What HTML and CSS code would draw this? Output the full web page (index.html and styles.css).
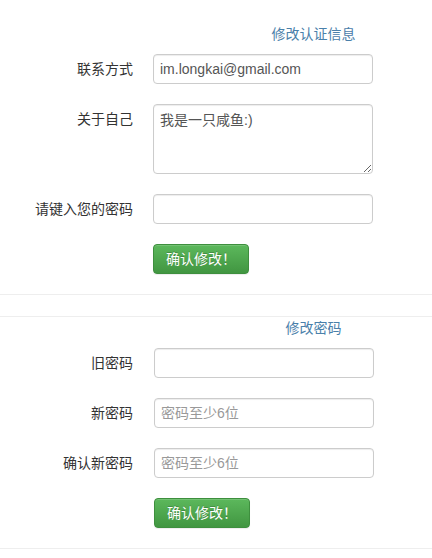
FILE: index.html
```html
<!DOCTYPE html>
<html lang="zh-CN">
<head>
<meta charset="utf-8">
<title>设置</title>
<link rel="stylesheet" href="styles.css">
</head>
<body>
<section class="panel panel-info">
  <div class="panel-title"><a href="#" class="title-link">修改认证信息</a></div>
  <div class="row">
    <label class="row-label">联系方式</label>
    <input class="field" type="text" value="im.longkai@gmail.com">
  </div>
  <div class="row">
    <label class="row-label">关于自己</label>
    <textarea class="field field-area">我是一只咸鱼:)</textarea>
  </div>
  <div class="row">
    <label class="row-label">请键入您的密码</label>
    <input class="field" type="password">
  </div>
  <div class="row">
    <span class="row-label"></span>
    <button class="btn-success" type="button">确认修改！</button>
  </div>
</section>
<section class="panel panel-pwd">
  <div class="panel-title"><a href="#" class="title-link">修改密码</a></div>
  <div class="row row-shift">
    <label class="row-label">旧密码</label>
    <input class="field" type="password">
  </div>
  <div class="row row-shift">
    <label class="row-label">新密码</label>
    <input class="field" type="password" placeholder="密码至少6位">
  </div>
  <div class="row row-shift">
    <label class="row-label">确认新密码</label>
    <input class="field" type="password" placeholder="密码至少6位">
  </div>
  <div class="row row-shift">
    <span class="row-label"></span>
    <button class="btn-success" type="button">确认修改！</button>
  </div>
</section>
</body>
</html>
```

FILE: styles.css
```css
html, body {
  margin: 0;
  padding: 0;
  background: #fff;
}
body {
  font-family: "Liberation Sans", "Noto Sans CJK SC", sans-serif;
  font-size: 14px;
  line-height: 20px;
  color: #333;
}
.panel {
  border-bottom: 1px solid #eee;
}
.panel-info {
  padding-top: 24px;
}
.panel-pwd {
  margin-top: 21px;
  border-top: 1px solid #eee;
  padding-top: 1px;
}
.panel-title {
  padding-left: 195px;
  text-align: center;
  line-height: 20px;
  margin-bottom: 10px;
}
.title-link {
  color: #4a80aa;
  text-decoration: none;
}
.row {
  display: flex;
  align-items: flex-start;
  gap: 20px;
  margin-bottom: 20px;
}
.row-shift {
  gap: 21px;
}
.row-label {
  width: 133px;
  flex: none;
  text-align: right;
  padding-top: 5px;
  line-height: 20px;
  color: #333;
}
.field {
  display: block;
  box-sizing: border-box;
  width: 220px;
  height: 30px;
  margin: 0;
  padding: 4px 6px;
  border: 1px solid #ccc;
  border-radius: 4px;
  box-shadow: inset 0 1px 1px rgba(0,0,0,.075);
  font-family: "Liberation Sans", "Noto Sans CJK SC", sans-serif;
  font-size: 14px;
  line-height: 20px;
  color: #555;
  background: #fff;
  outline: none;
}
.field::placeholder {
  color: #999;
}
.field-area {
  height: 70px;
  padding: 5px 6px;
  resize: vertical;
}
.btn-success {
  display: block;
  box-sizing: border-box;
  height: 30px;
  margin: 0;
  padding: 4px 12px;
  border: 1px solid #3e8f3e;
  border-radius: 4px;
  background-color: #5cb85c;
  background-image: linear-gradient(to bottom, #5cb85c 0%, #419641 100%);
  box-shadow: inset 0 1px 0 rgba(255,255,255,.15), 0 1px 1px rgba(0,0,0,.075);
  text-shadow: 0 -1px 0 rgba(0,0,0,.2);
  font-family: "Liberation Sans", "Noto Sans CJK SC", sans-serif;
  font-size: 14px;
  line-height: 20px;
  color: #fff;
  cursor: pointer;
}
```
